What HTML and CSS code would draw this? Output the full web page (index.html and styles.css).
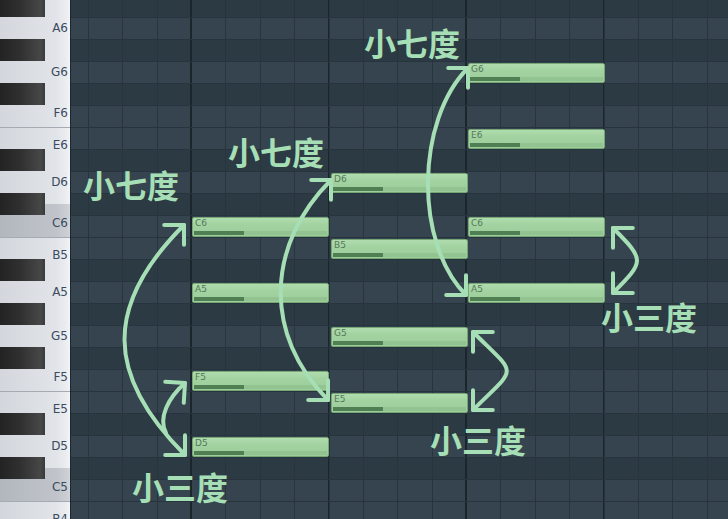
FILE: index.html
```html
<!DOCTYPE html>
<html>
<head>
<meta charset="utf-8">
<link rel="stylesheet" href="styles.css">
</head>
<body>
<div class="roll">
  <div class="keys">
    <div class="key b"></div>
    <div class="key"><span>A6</span></div>
    <div class="key b"></div>
    <div class="key"><span>G6</span></div>
    <div class="key b"></div>
    <div class="key up"><span>F6</span></div>
    <div class="key edge down"><span>E6</span></div>
    <div class="key b"></div>
    <div class="key"><span>D6</span></div>
    <div class="key b cs"></div>
    <div class="key c up"><span>C6</span></div>
    <div class="key edge down"><span>B5</span></div>
    <div class="key b"></div>
    <div class="key"><span>A5</span></div>
    <div class="key b"></div>
    <div class="key"><span>G5</span></div>
    <div class="key b"></div>
    <div class="key up"><span>F5</span></div>
    <div class="key edge down"><span>E5</span></div>
    <div class="key b"></div>
    <div class="key"><span>D5</span></div>
    <div class="key b cs"></div>
    <div class="key c up"><span>C5</span></div>
    <div class="key edge down"><span>B4</span></div>
  </div>
  <div class="grid">
    <div class="row b"></div>
    <div class="row"></div>
    <div class="row b"></div>
    <div class="row"></div>
    <div class="row b"></div>
    <div class="row"></div>
    <div class="row"></div>
    <div class="row b"></div>
    <div class="row"></div>
    <div class="row b"></div>
    <div class="row"></div>
    <div class="row"></div>
    <div class="row b"></div>
    <div class="row"></div>
    <div class="row b"></div>
    <div class="row"></div>
    <div class="row b"></div>
    <div class="row"></div>
    <div class="row"></div>
    <div class="row b"></div>
    <div class="row"></div>
    <div class="row b"></div>
    <div class="row"></div>
    <div class="row"></div>

    <div class="note" style="left:121px;top:222px">C6<i></i></div>
    <div class="note" style="left:121px;top:288px">A5<i></i></div>
    <div class="note" style="left:121px;top:376px">F5<i></i></div>
    <div class="note" style="left:121px;top:442px">D5<i></i></div>
    <div class="note" style="left:260px;top:178px">D6<i></i></div>
    <div class="note" style="left:260px;top:244px">B5<i></i></div>
    <div class="note" style="left:260px;top:332px">G5<i></i></div>
    <div class="note" style="left:260px;top:398px">E5<i></i></div>
    <div class="note" style="left:397px;top:68px">G6<i></i></div>
    <div class="note" style="left:397px;top:134px">E6<i></i></div>
    <div class="note" style="left:397px;top:222px">C6<i></i></div>
    <div class="note" style="left:397px;top:288px">A5<i></i></div>
  </div>

  <svg class="arrows" width="728" height="519" viewBox="0 0 728 519">
    <defs>
      <marker id="ah" viewBox="-20 -20 40 40" markerWidth="40" markerHeight="40" refX="0" refY="0" markerUnits="userSpaceOnUse" orient="auto-start-reverse">
        <path d="M-14,-14 L0,0 L-14,14" fill="none" stroke="#a6dfb5" stroke-width="4" stroke-linecap="round" stroke-linejoin="round"/>
      </marker>
    </defs>
    <g fill="none" stroke="#a6dfb5" stroke-width="4" stroke-linecap="round">
      <path d="M184,225 C104,305 105,375 185,455" marker-start="url(#ah)" marker-end="url(#ah)"/>
      <path d="M166,433 C158,418 168,398 185,383" marker-end="url(#ah)"/>
      <path d="M331,180 C266,245 263,335 328,400" marker-start="url(#ah)" marker-end="url(#ah)"/>
      <path d="M468,68 C416,120 414,243 466,295" marker-start="url(#ah)" marker-end="url(#ah)"/>
      <path d="M473,332 C518,377 518,365 473,410" marker-start="url(#ah)" marker-end="url(#ah)"/>
      <path d="M613,228 C645,260 645,261 613,293" marker-start="url(#ah)" marker-end="url(#ah)"/>
    </g>
  </svg>

  <div class="tag t1">小七度</div>
  <div class="tag t2">小七度</div>
  <div class="tag t3">小七度</div>
  <div class="tag t4">小三度</div>
  <div class="tag t5">小三度</div>
  <div class="tag t6">小三度</div>
</div>
</body>
</html>
```

FILE: styles.css
```css
html, body {
  margin: 0;
  padding: 0;
  background: #2f3d47;
}

.roll {
  position: relative;
  display: flex;
  width: 728px;
  height: 519px;
  overflow: hidden;
  background: #2f3d47;
}

/* keyboard */
.keys {
  width: 70px;
  flex: none;
  display: flex;
  flex-direction: column;
  margin-top: -5px;
}

.key {
  position: relative;
  height: 22px;
  flex: none;
  box-sizing: border-box;
  display: flex;
  align-items: center;
  justify-content: flex-end;
  padding-right: 2px;
  font: 12px/12px "DejaVu Sans", sans-serif;
  color: #3b4b5f;
  background: linear-gradient(to right, #d3d7dd, #e1e4e8 80%, #eceef1 96%, #f4f5f7);
}

.key.up {
  padding-bottom: 7px;
}

.key.down {
  padding-top: 13px;
}

.key.c {
  background: linear-gradient(to right, #b2b7be, #c0c4ca 80%, #cbced3 96%, #d4d6da);
}

.key.cs {
  background-image:
    linear-gradient(to right, #b2b7be, #c0c4ca 80%, #cbced3 96%, #d4d6da),
    linear-gradient(to right, #d3d7dd, #e1e4e8 80%, #eceef1 96%, #f4f5f7);
  background-size: 100% 11px, 100% 100%;
  background-position: 0 100%, 0 0;
  background-repeat: no-repeat;
}

.key.edge {
  border-top: 1px solid #a6abb3;
}

.key.b::before {
  content: "";
  position: absolute;
  left: 0;
  top: 0;
  width: 45px;
  height: 22px;
  background: linear-gradient(to right, #232323, #303030 45%, #474747 90%, #3a3a3a);
}

/* grid */
.grid {
  position: relative;
  flex: 1;
  display: flex;
  flex-direction: column;
  margin-top: -5px;
  border-left: 1px solid #1c262d;
}

.row {
  height: 22px;
  flex: none;
  box-sizing: border-box;
  border-top: 1px solid #28343d;
  background-color: #35444e;
  background-image:
    repeating-linear-gradient(90deg, transparent 0, transparent 119.5px, #1b252c 119.5px, #1b252c 121px, transparent 121px, transparent 137.5px),
    repeating-linear-gradient(90deg, transparent 0, transparent 17px, #29353e 17px, #29353e 18px, transparent 18px, transparent 34.375px);
}

.row.b {
  background-color: #2c3a44;
}

/* notes */
.note {
  position: absolute;
  width: 137px;
  height: 20px;
  box-sizing: border-box;
  border: 1px solid #77a676;
  border-radius: 2px;
  background: linear-gradient(#b0dcae, #a2d2a0 40%, #9ccd9a);
  padding: 1px 0 0 2px;
  font: 9px/9px "DejaVu Sans", sans-serif;
  color: #55785a;
}

.note i {
  position: absolute;
  left: 1px;
  right: 1px;
  bottom: 1px;
  height: 4px;
  background: #92c491;
}

.note i::before {
  content: "";
  position: absolute;
  left: 0;
  top: 0;
  width: 50px;
  height: 4px;
  background: #4f7f53;
}

/* annotations */
.arrows {
  position: absolute;
  left: 0;
  top: 0;
  pointer-events: none;
}

.tag {
  position: absolute;
  font: 700 32px/32px "Noto Sans CJK SC", sans-serif;
  color: #a6dfb5;
  white-space: nowrap;
}

.t1 { left: 364px; top: 26px; }
.t2 { left: 228px; top: 135px; }
.t3 { left: 83px; top: 168px; }
.t4 { left: 132px; top: 470px; }
.t5 { left: 430px; top: 423px; }
.t6 { left: 601px; top: 300px; }
```
